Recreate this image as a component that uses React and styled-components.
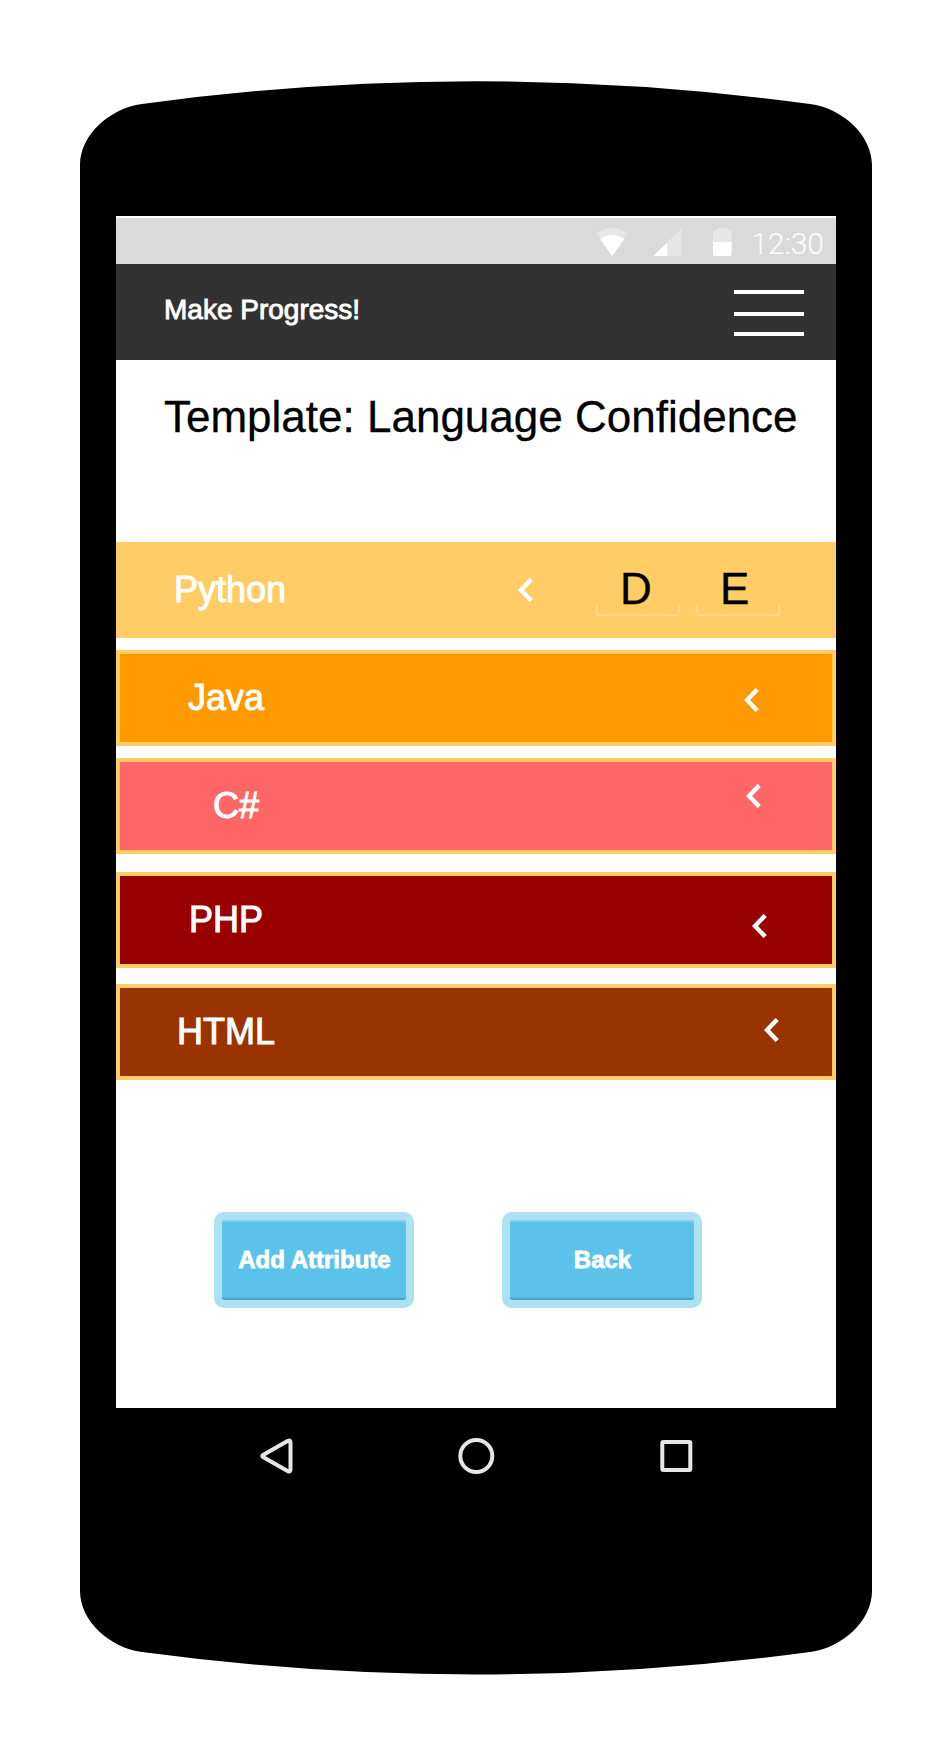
import React from "react";
import styled, { createGlobalStyle } from "styled-components";

const GlobalStyle = createGlobalStyle`
  *, *::before, *::after { box-sizing: border-box; }
  body {
    margin: 0;
    background: #fff;
    font-family: "Liberation Sans", Arial, Helvetica, sans-serif;
  }
`;

const Page = styled.main`
  width: 952px;
  height: 1756px;
  padding: 81px 80px;
`;

const Phone = styled.div`
  width: 792px;
  height: 1594px;
  padding: 135px 36px 0;
  background: #000;
  clip-path: path("M0 84 C0 54 30 27 62 23 Q396 -22.5 730 23 C762 27 792 54 792 84 V1510 C792 1540 762 1567 730 1571 Q396 1616 62 1571 C30 1567 0 1540 0 1510 Z");
`;

const Screen = styled.div`
  display: flex;
  flex-direction: column;
  height: 1192px;
  padding-top: 2px;
  background: #fff;
`;

const StatusBar = styled.div`
  display: flex;
  justify-content: flex-end;
  align-items: flex-start;
  height: 46px;
  padding: 10px 12px 0 0;
  background: #dadada;
`;

const StatusIcons = styled.svg`
  display: block;
  width: 136px;
  height: 28px;
  margin-right: 19px;
`;

const Clock = styled.time`
  font: 300 30px/32px Roboto, sans-serif;
  color: #fcfcfc;
`;

const Header = styled.header`
  display: flex;
  justify-content: space-between;
  align-items: flex-start;
  height: 96px;
  padding: 26px 32px 0 48px;
  background: #323232;
`;

const Brand = styled.div`
  padding-top: 4px;
  font-size: 28px;
  line-height: 32px;
  color: #fff;
  -webkit-text-stroke: 0.9px #fff;
`;

const MenuIcon = styled.svg`
  display: block;
  width: 70px;
  height: 46px;
`;

const Title = styled.h1`
  margin: 0;
  height: 182px;
  padding: 32px 0 0 48px;
  font-size: 44px;
  font-weight: 400;
  line-height: 50px;
  white-space: nowrap;
  color: #000;
  -webkit-text-stroke: 0.3px #000;
`;

const Row = styled.div`
  display: flex;
  align-items: center;
  flex: none;
  height: 96px;
  margin-bottom: ${(p) => p.$gap}px;
  border: 4px solid #fc6;
  background: ${(p) => p.$color};
`;

const RowLabel = styled.span`
  flex: 1;
  padding-left: ${(p) => p.$indent}px;
  font-size: 36px;
  line-height: 42px;
  color: #fff;
  -webkit-text-stroke: 1px #fff;
`;

const ChevronIcon = styled.svg`
  display: block;
  flex: none;
  width: 16px;
  height: 24px;
  margin-top: ${(p) => p.$shift * 2}px;
  margin-right: ${(p) => p.$end}px;
`;

const Fields = styled.div`
  display: flex;
  gap: 16px;
  padding-right: 52px;
`;

const Field = styled.div`
  position: relative;
  width: 84px;
  height: 52px;
  padding-left: 24px;
  font-size: 44px;
  line-height: 50px;
  color: #000;
  -webkit-text-stroke: 0.3px #000;

  &::after {
    content: "";
    position: absolute;
    inset: auto 0 0;
    height: 12px;
    border: 2px solid #ffd88c;
    border-top: 0;
  }
`;

const Actions = styled.div`
  display: flex;
  gap: 88px;
  margin-top: 132px;
  padding-left: 98px;
`;

const Action = styled.button`
  width: 200px;
  height: 96px;
  padding: 8px;
  border: 0;
  border-radius: 10px;
  background: #ade1f4;
  font: bold 24px/28px "Liberation Sans", Arial, sans-serif;
  white-space: nowrap;
  color: #fff;
  -webkit-text-stroke: 0.8px #fff;
`;

const ActionFace = styled.span`
  display: flex;
  align-items: center;
  justify-content: center;
  height: 80px;
  padding-left: 1px;
  border-radius: 3px;
  background: #5bc2ea;
  box-shadow: inset 0 -2px 1px #4ba4c6, inset 0 2px 1px #84d0ee, inset 0 0 2px #84d0ee;
`;

const NavBar = styled.svg`
  display: block;
  width: 720px;
  height: 96px;
`;

const rows = [
  { name: "Python", color: "#fc6", indent: 54, end: 62, shift: 0, gap: 12, values: ["D", "E"] },
  { name: "Java", color: "#f90", indent: 68, end: 72, shift: 2, gap: 12 },
  { name: "C#", color: "#f66", indent: 93, end: 70, shift: -10, gap: 18 },
  { name: "PHP", color: "#900", indent: 69, end: 64, shift: 6, gap: 16 },
  { name: "HTML", color: "#930", indent: 57, end: 52, shift: -2, gap: 0 },
];

function Chevron({ end, shift }) {
  return (
    <ChevronIcon viewBox="0 0 16 24" $end={end} $shift={shift}>
      <path d="M13.2 1.4 L3 12 L13.2 22.6" fill="none" stroke="#fff" strokeWidth="4.4" />
    </ChevronIcon>
  );
}

function LanguageRow({ name, color, indent, end, shift, gap, values }) {
  return (
    <Row $color={color} $gap={gap}>
      <RowLabel $indent={indent}>{name}</RowLabel>
      <Chevron end={end} shift={shift} />
      {values && (
        <Fields>
          {values.map((value) => (
            <Field key={value}>{value}</Field>
          ))}
        </Fields>
      )}
    </Row>
  );
}

export default function App() {
  return (
    <Page>
      <GlobalStyle />
      <Phone>
        <Screen>
          <StatusBar>
            <StatusIcons viewBox="0 0 136 28">
              <path d="M0.2 5.2 Q16 -5 32 5.2 L16.2 28 Z" fill="#e6e6e6" />
              <path d="M4.2 11 Q16 3.2 28.2 11 L16.2 28 Z" fill="#fff" />
              <path d="M57.5 28 L85.5 0.5 V28 Z" fill="#e6e6e6" />
              <path d="M57.5 28 L71.3 14.4 V28 Z" fill="#fff" />
              <path d="M121.5 0 H131 V2 H134 Q135.7 2 135.7 4 V14 H117 V4 Q117 2 119 2 H121.5 Z" fill="#e6e6e6" />
              <path d="M117 14 H135.7 V26 Q135.7 28 133.7 28 H119 Q117 28 117 26 Z" fill="#fff" />
            </StatusIcons>
            <Clock>12:30</Clock>
          </StatusBar>
          <Header>
            <Brand>Make Progress!</Brand>
            <MenuIcon viewBox="0 0 70 46" fill="#fff">
              <rect width="70" height="4" />
              <rect y="22" width="70" height="4" />
              <rect y="42" width="70" height="4" />
            </MenuIcon>
          </Header>
          <Title>Template: Language Confidence</Title>
          {rows.map((row) => (
            <LanguageRow key={row.name} {...row} />
          ))}
          <Actions>
            <Action><ActionFace>Add Attribute</ActionFace></Action>
            <Action><ActionFace>Back</ActionFace></Action>
          </Actions>
        </Screen>
        <NavBar viewBox="0 0 720 96" fill="none" stroke="#e6e6e6" strokeWidth="4" strokeLinejoin="round">
          <path d="M147 47 Q145.5 48 147 49 L172 63.2 Q174.5 64.5 174.5 61 V35 Q174.5 31.5 172 32.8 Z" />
          <circle cx="360.3" cy="48" r="16" />
          <rect x="546.3" y="34" width="28" height="28" rx="1" />
        </NavBar>
      </Phone>
    </Page>
  );
}
